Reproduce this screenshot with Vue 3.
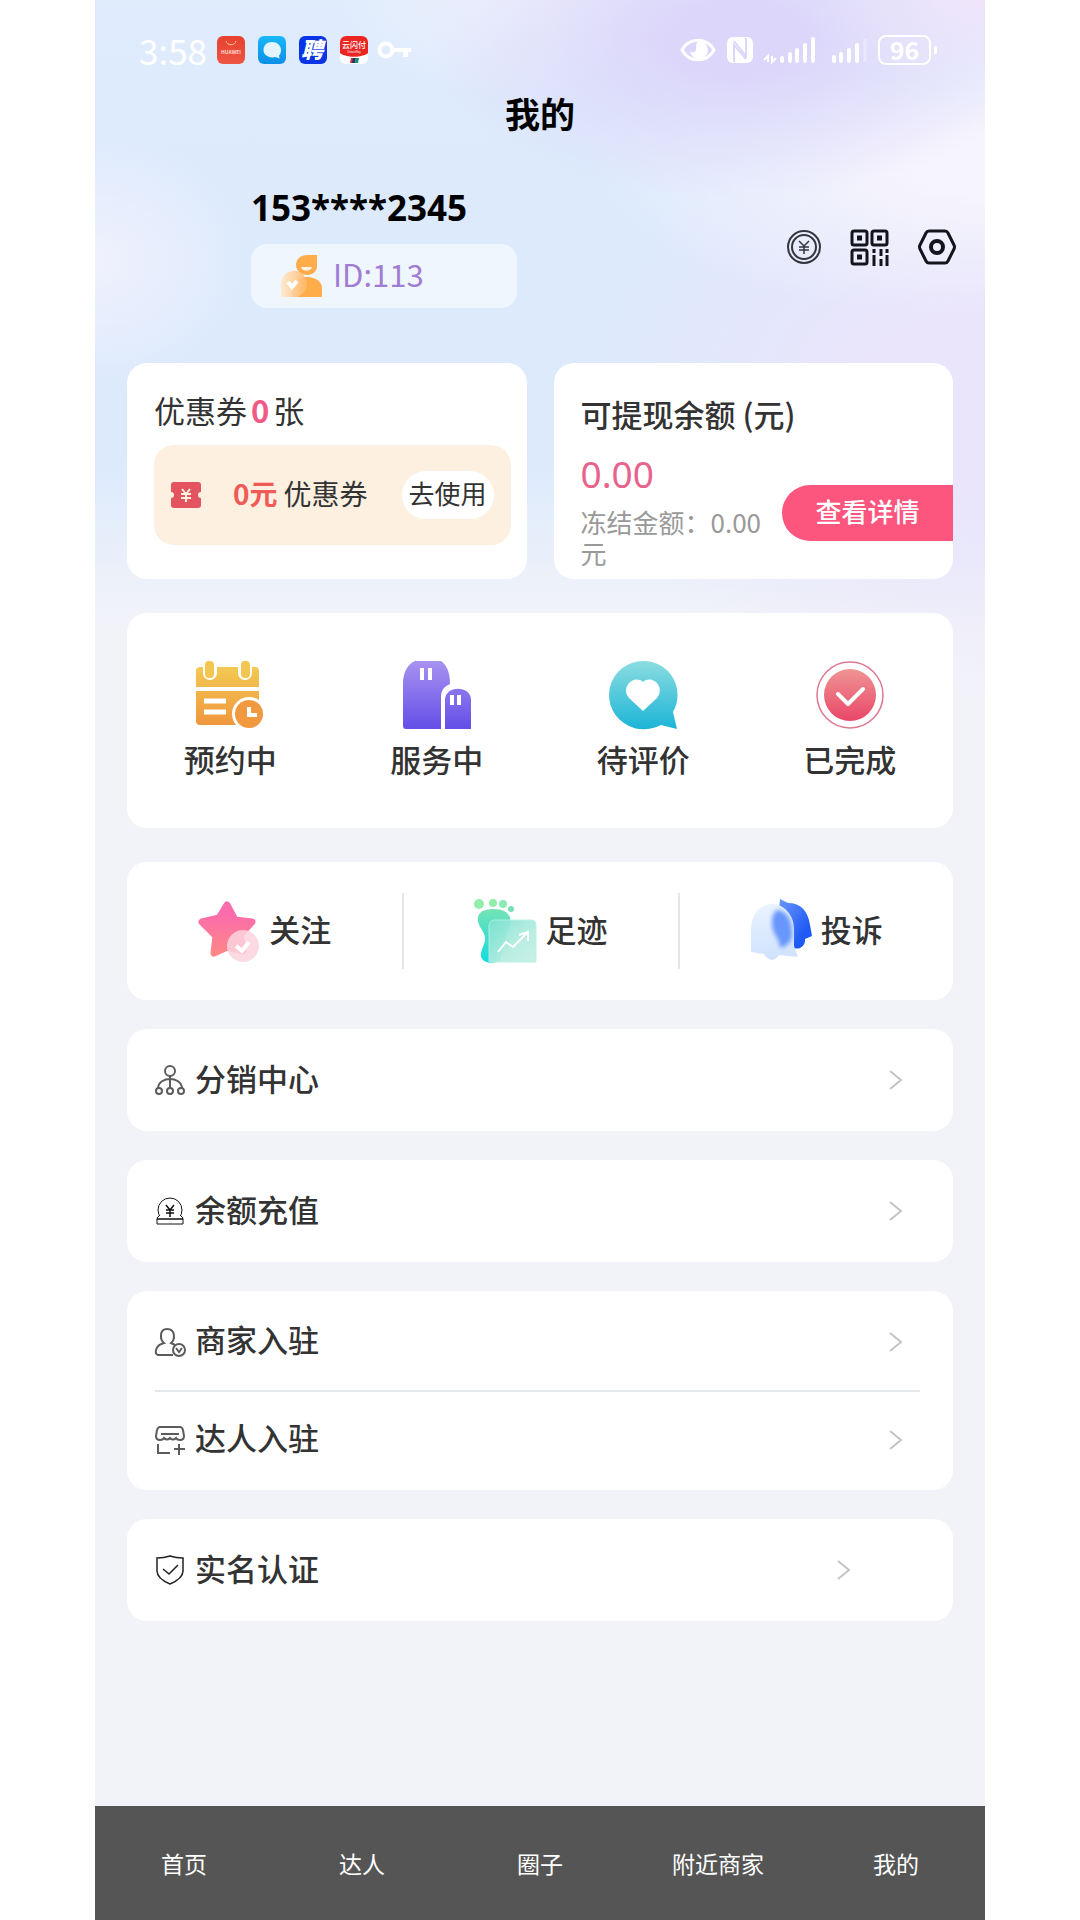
<script setup>
const orders = [
  { key: 'booked', label: '预约中' },
  { key: 'serving', label: '服务中' },
  { key: 'review', label: '待评价' },
  { key: 'done', label: '已完成' },
]
const shortcuts = [
  { key: 'follow', label: '关注' },
  { key: 'track', label: '足迹' },
  { key: 'complain', label: '投诉' },
]
const menuGroups = [
  [{ key: 'share', label: '分销中心' }],
  [{ key: 'recharge', label: '余额充值' }],
  [{ key: 'merchant', label: '商家入驻' }, { key: 'talent', label: '达人入驻' }],
  [{ key: 'verify', label: '实名认证', inset: true }],
]
const tabs = ['首页', '达人', '圈子', '附近商家', '我的']
</script>

<template>
  <div class="page">
    <div class="screen">
      <div class="status">
        <span class="time">3:58</span>
        <div class="apps">
          <svg class="app" viewBox="0 0 28 28">
            <defs><linearGradient id="mall" x1="0" y1="0" x2="0" y2="1"><stop stop-color="#e8402f" /><stop offset="1" stop-color="#ef5644" /></linearGradient></defs>
            <rect width="28" height="28" rx="6" fill="url(#mall)" />
            <path d="M9 5c1 5 9 5 10 0" fill="none" stroke="#ffc9a0" stroke-width="1" />
            <text x="14" y="18" text-anchor="middle" font-size="5" font-weight="700" fill="#ffd9cf">HUAWEI</text>
          </svg>
          <svg class="app" viewBox="0 0 28 28">
            <defs><linearGradient id="chat" x1="0" y1="0" x2="0" y2="1"><stop stop-color="#18b8f8" /><stop offset="1" stop-color="#0d8fe8" /></linearGradient></defs>
            <rect width="28" height="28" rx="6" fill="url(#chat)" />
            <path d="M14 6c5 0 9 3.500 9 8 0 3-1 4.500-2 5.500l.5 3-4-1.500c-5 1.500-12-1-12-7 0-4.500 3.500-8 8.500-8z" fill="#e2f5ff" />
          </svg>
          <svg class="app" viewBox="0 0 28 28">
            <rect width="28" height="28" rx="6" fill="#0a35e6" />
            <text x="13" y="22" text-anchor="middle" font-size="22" font-weight="900" font-style="italic" fill="#fff">聘</text>
          </svg>
          <svg class="app" viewBox="0 0 28 28">
            <rect width="28" height="28" rx="6" fill="#fff" />
            <path d="M0 17V6a6 6 0 0 1 6-6h16a6 6 0 0 1 6 6v11c-6 5-22 5-28 0z" fill="#ea2622" />
            <text x="14" y="12" text-anchor="middle" font-size="8" font-weight="500" fill="#fff">云闪付</text>
            <text x="14" y="17" text-anchor="middle" font-size="3" fill="#fff">UnionPay</text>
            <path d="M11 22h3l-1 5h-3z" fill="#d3303a" /><path d="M13 22h3l-1 5h-3z" fill="#22355f" /><path d="M16 22h3l-1 5h-3z" fill="#178a7c" />
          </svg>
        </div>
        <svg class="key" viewBox="0 0 34 20">
          <circle cx="9" cy="10" r="6.500" fill="none" stroke="#fff" stroke-width="4" />
          <path d="M16 8h18v4h-3v5h-5v-5H16z" fill="#fff" />
        </svg>
        <div class="signals">
          <svg width="36" height="26" viewBox="0 0 36 26">
            <path d="M2 13C9 0 27 0 34 13 27 26 9 26 2 13z" fill="none" stroke="#fff" stroke-width="3" />
            <path d="M19 4a9 9 0 1 1-9 10c2 3 7 1 6-3 0-3 0-5 3-7z" fill="#fff" />
          </svg>
          <svg width="26" height="28" viewBox="0 0 26 28">
            <rect y="1" width="26" height="26" rx="6" fill="#fff" />
            <path d="M7 26V9l12 14M7 5l12 15V2" fill="none" stroke="#ddd8f9" stroke-width="2" />
          </svg>
          <svg class="bars" width="51" height="28" viewBox="0 0 51 28">
            <path d="M4 26v-6l-4 4M8 20v6l4-4" fill="none" stroke="#fff" stroke-width="2" />
            <path d="M18 25v-3M26 25v-7M33 25V14M41 25V9M49 25V3" stroke="#fff" stroke-width="4" stroke-linecap="round" />
          </svg>
          <svg class="bars" width="36" height="28" viewBox="0 0 36 28">
            <path d="M3 25v-4M10 25v-7M18 25V14M26 25V9" stroke="#fff" stroke-width="4" stroke-linecap="round" />
            <path d="M34 26V3" stroke="#fff" stroke-width="3" opacity=".3" />
          </svg>
          <span class="battery">96</span>
        </div>
      </div>

      <h1 class="title">我的</h1>

      <header class="profile">
        <div class="who">
          <strong class="phone">153****2345</strong>
          <div class="badge">
            <svg class="member" viewBox="0 0 42 44">
              <defs>
                <linearGradient id="chk" x1="0" y1="0" x2="1" y2="0"><stop offset="0" stop-color="#ffe9cd" /><stop offset="1" stop-color="#ffb868" /></linearGradient>
              </defs>
              <path d="M37 1v11c0 5-4 9-10 9s-11-4-11-10S21 1 27 1z" fill="#ffad4a" />
              <path d="M21 13h11c-1 5-10 5-11 0z" fill="#fff3e2" />
              <path d="M12 43V33c0-6 6-10 15-10s15 5 15 11v9z" fill="#ffad4a" />
              <path d="M1 43V31a13 13 0 1 1 21 9l-4 3z" fill="url(#chk)" opacity=".9" />
              <path d="M8 28l4 5 5-6" fill="none" stroke="#fff" stroke-width="4" />
            </svg>
            <span class="uid">ID:113</span>
          </div>
        </div>
        <div class="tools">
          <button type="button" aria-label="钱包">
            <svg width="34" height="34" viewBox="0 0 34 34" fill="none" stroke="#35353d" stroke-width="2">
              <circle cx="17" cy="17" r="16" /><circle cx="17" cy="17" r="12" />
              <path d="M12 11l5 5 5-5M17 16v8M12 17h10M12 20h10" stroke-width="1.500" />
            </svg>
          </button>
          <button type="button" aria-label="二维码">
            <svg width="39" height="37" viewBox="0 0 39 37" fill="none" stroke="#14141c" stroke-width="3">
              <rect x="2" y="2" width="15" height="14" rx="2" /><rect x="22" y="2" width="15" height="14" rx="2" /><rect x="2" y="21" width="15" height="14" rx="2" />
              <path d="M7 9h5M27 9h5M7 28h5" stroke-width="5" />
              <path d="M24 20v4M24 26v11M31 20v7M31 30v7M37 20v4M37 26v11" />
            </svg>
          </button>
          <button type="button" aria-label="设置">
            <svg width="38" height="36" viewBox="0 0 38 36" fill="none" stroke="#14141c" stroke-width="3" stroke-linejoin="round">
              <path d="M11 2h16q2 0 3 2l6 12q1 2 0 4l-6 12q-1 2-3 2H11q-2 0-3-2L2 20q-1-2 0-4L8 4q1-2 3-2z" />
              <circle cx="19" cy="18" r="6" stroke-width="4" />
            </svg>
          </button>
        </div>
      </header>

      <main class="content">
        <div class="wallet">
          <section class="card coupons">
            <h2 class="coupon-title">优惠券<b>0</b>张</h2>
            <div class="coupon">
              <svg class="ticket" viewBox="0 0 30 26">
                <path d="M3 0h24q3 0 3 3v7a3 3 0 0 0 0 6v7q0 3-3 3H3q-3 0-3-3v-7a3 3 0 0 0 0-6V3q0-3 3-3z" fill="#e35460" />
                <path d="M11 7l4 5 4-5M15 12v8M10 12h10M10 16h10" fill="none" stroke="#fff0e0" stroke-width="2" />
              </svg>
              <span class="coupon-name"><b>0元</b>优惠券</span>
              <button type="button" class="use">去使用</button>
            </div>
          </section>
          <section class="card balance">
            <h2 class="balance-title">可提现余额 (元)</h2>
            <p class="amount">0.00</p>
            <p class="frozen">冻结金额：0.00元</p>
            <button type="button" class="detail">查看详情</button>
          </section>
        </div>

        <section class="card orders">
          <a v-for="o in orders" :key="o.key" href="#" class="order">
            <svg v-if="o.key === 'booked'" viewBox="0 0 68 68">
              <defs><linearGradient id="gold" x1="0" y1="0" x2="0" y2="68" gradientUnits="userSpaceOnUse"><stop stop-color="#f3cf55" /><stop offset="1" stop-color="#f0923c" /></linearGradient></defs>
              <path d="M5 6h54q4 0 4 4v16H0V10q0-4 5-4zM0 30h63v32q0 2-3 2H4q-4 0-4-4z" fill="url(#gold)" />
              <rect x="7" y="-3" width="14" height="22" rx="7" fill="#fff" /><rect x="42" y="-3" width="14" height="22" rx="7" fill="#fff" />
              <rect x="9" y="0" width="9" height="17" rx="4" fill="#f2c650" /><rect x="45" y="0" width="9" height="17" rx="4" fill="#f2c650" />
              <path d="M8 40h22M8 51h22" stroke="#fff" stroke-width="5" />
              <circle cx="53" cy="53" r="17" fill="#fff" /><circle cx="53" cy="53" r="14" fill="#f0993f" />
              <path d="M53 46v8h8" fill="none" stroke="#fff" stroke-width="4" />
            </svg>
            <svg v-else-if="o.key === 'serving'" viewBox="0 0 68 68">
              <defs><linearGradient id="violet" x1="0" y1="0" x2="0" y2="68" gradientUnits="userSpaceOnUse"><stop stop-color="#a892f0" /><stop offset="1" stop-color="#634ee8" /></linearGradient></defs>
              <path d="M12 0h26c6 4 9 12 9 23-7 3-9 7-9 14v31H3q-3 0-3-3V20C1 10 5 3 12 0z" fill="url(#violet)" />
              <path d="M42 68V39c0-15 26-15 26 0v29z" fill="url(#violet)" />
              <path d="M19 7v12M27 7v12M49 34v10M56 34v10" stroke="#fff" stroke-width="4" />
            </svg>
            <svg v-else-if="o.key === 'review'" viewBox="0 0 68 68">
              <defs><linearGradient id="cyan" x1="0" y1="0" x2="0" y2="1"><stop stop-color="#8bdde0" /><stop offset="1" stop-color="#1cb4d8" /></linearGradient></defs>
              <path d="M34 0a34 34 0 0 1 30 51l4 17-16-4c-12 6-24 5-32 1A34 34 0 0 1 34 0z" fill="url(#cyan)" />
              <path d="M34 50L20 37c-9-11 5-24 14-16 9-8 23 5 14 16z" fill="#fff" />
            </svg>
            <svg v-else viewBox="0 0 68 68">
              <defs><linearGradient id="rose" x1="0" y1="0" x2="0" y2="1"><stop stop-color="#ef9494" /><stop offset="1" stop-color="#e94768" /></linearGradient></defs>
              <circle cx="34" cy="34" r="33" fill="none" stroke="#dc7890" stroke-width="1.500" />
              <circle cx="34" cy="34" r="26" fill="url(#rose)" />
              <path d="M22 33l10 10 15-15" fill="none" stroke="#fff" stroke-width="4" stroke-linecap="round" stroke-linejoin="round" />
            </svg>
            <span>{{ o.label }}</span>
          </a>
        </section>

        <section class="card shortcuts">
          <a v-for="s in shortcuts" :key="s.key" href="#" class="shortcut">
            <svg v-if="s.key === 'follow'" viewBox="0 0 62 66">
              <defs><linearGradient id="star" x1="0" y1="5" x2="0" y2="56" gradientUnits="userSpaceOnUse"><stop offset=".2" stop-color="#fb6cac" /><stop offset="1" stop-color="#fd8687" /></linearGradient></defs>
              <path d="M29 7l8 15 17 2-12 13 3 16-16-4-13 6 2-17L4 24l17-4z" fill="url(#star)" stroke="url(#star)" stroke-width="7" stroke-linejoin="round" />
              <circle cx="45" cy="48" r="16" fill="#fcd3de" opacity=".85" />
              <path d="M38 48l6 5 7-9" fill="none" stroke="#fff" stroke-width="4" />
            </svg>
            <svg v-else-if="s.key === 'track'" viewBox="0 0 62 66">
              <defs>
                <linearGradient id="foot" x1="0" y1="0" x2="0" y2="1"><stop stop-color="#74e3b4" /><stop offset="1" stop-color="#12dcdf" /></linearGradient>
                <linearGradient id="glass" x1="0" y1="0" x2="1" y2="1"><stop stop-color="#7ee3d1" /><stop offset=".6" stop-color="#b5ece0" /><stop offset="1" stop-color="#c5f0e5" /></linearGradient>
              </defs>
              <circle cx="5" cy="6" r="5" fill="#94edaa" /><circle cx="19" cy="5" r="4" fill="#94edaa" /><circle cx="29" cy="6" r="4" fill="#8ceab5" /><circle cx="37" cy="11" r="3" fill="#74e2b6" />
              <path d="M19 11c13 0 19 6 17 15-3 12-7 18-10 36-8 6-21 2-19-7 3-11 7-13 1-23C-1 19 5 11 19 11z" fill="url(#foot)" />
              <path d="M15 64V28q0-6 6-6h36q5 0 5 5v37z" fill="url(#glass)" opacity=".93" stroke="#b5efe3" />
              <path d="M24 54l8-10 7 5 14-14M45 37l9-3v9" fill="none" stroke="#fff" stroke-width="2" />
            </svg>
            <svg v-else viewBox="0 0 62 66">
              <defs>
                <linearGradient id="head" x1="0" y1="0" x2="1" y2="1"><stop stop-color="#719cfa" /><stop offset=".75" stop-color="#1d59f4" /></linearGradient>
                <linearGradient id="shell" x1="0" y1="0" x2="0" y2="1"><stop stop-color="#eaf3ff" /><stop offset="1" stop-color="#cfe2fd" /></linearGradient>
                <filter id="soft" x="-20%" y="-20%" width="140%" height="140%"><feGaussianBlur stdDeviation="2" /></filter>
              </defs>
              <path d="M30 1l8 4c13 0 20 8 22 22l2 11-7 3c1 8-8 12-12 8L26 40z" fill="url(#head)" />
              <path d="M1 54V31C2 14 11 7 22 6c11 0 22 10 22 25v17l4 11-19-2c-4 7-11 6-15-1z" fill="url(#shell)" />
              <path d="M28 12c11 2 14 12 14 24 0 7-4 12-12 14 0-11-9-14-8-26 0-6 2-11 6-12z" fill="#6796fb" filter="url(#soft)" />
            </svg>
            <span>{{ s.label }}</span>
          </a>
        </section>

        <nav v-for="(group, i) in menuGroups" :key="i" class="card menu" :class="{ double: group.length > 1 }">
          <a v-for="m in group" :key="m.key" href="#" class="item" :class="{ inset: m.inset }">
            <svg class="item-icon" viewBox="0 0 30 30" fill="none" stroke="#5c5c5c" stroke-width="2">
              <template v-if="m.key === 'share'">
                <circle cx="15" cy="6" r="5" /><path d="M15 11v12M3 23c1-12 23-12 24 0" />
                <circle cx="4" cy="26" r="3" /><circle cx="15" cy="26" r="3" /><circle cx="26" cy="26" r="3" />
              </template>
              <g v-else-if="m.key === 'recharge'" stroke="#111" stroke-width="1">
                <circle cx="15" cy="14" r="12" fill="#fff" /><path d="M4 20q-2 1-2 3h26q0-2-2-3M2 23v5h26v-5z" fill="#fff" />
                <path d="M11 9l4 5 4-5M15 14v7M11 14h8M11 17h8" stroke-width="1.500" />
              </g>
              <template v-else-if="m.key === 'merchant'">
                <path d="M18 28H3q-3-1-2-5c1-4 4-6 8-7-4-3-5-14 3-14 9 0 8 11 4 14l4 2" />
                <circle cx="24" cy="23" r="6" /><path d="M21 21l3 4 3-4" />
              </template>
              <template v-else-if="m.key === 'talent'">
                <path d="M5 2h20q2 0 3 3l1 6q0 4-4 4-3 0-4-2-3 3-6 0-3 3-6 0-1 2-4 2-4 0-4-4l1-6q1-3 3-3zM6 9h18M3 19v9h12M24 19v11M19 24h11" />
              </template>
              <g v-else stroke="#222">
                <path d="M15 1c3 1 8 2 13 2v13c0 6-6 10-13 13C8 26 2 22 2 16V3c5 0 10-1 13-2z" stroke-width="1.500" /><path d="M8 14l6 5 9-9" stroke-width="1.500" />
              </g>
            </svg>
            <span class="item-label">{{ m.label }}</span>
            <svg class="chevron" viewBox="0 0 13 20" fill="none" stroke="#c4c4c4" stroke-width="2"><path d="M1 1l11 9-11 9" /></svg>
          </a>
        </nav>
      </main>

      <nav class="tabbar">
        <a v-for="t in tabs" :key="t" href="#">{{ t }}</a>
      </nav>
    </div>
  </div>
</template>

<style>
body {
  margin: 0;
  background: #fff;
}
</style>

<style scoped>
* {
  box-sizing: border-box;
}
.page {
  padding: 0 95px;
  font-family: "Noto Sans CJK SC", "Noto Sans", sans-serif;
  color: #333;
}
.screen {
  display: flex;
  flex-direction: column;
  min-height: 100vh;
  background:
    radial-gradient(ellipse 180px 90px at 100% 0, #f0e5fb, rgba(240, 229, 251, 0) 100%),
    radial-gradient(ellipse 310px 160px at 72% 40px, #dcd6fa 20%, rgba(220, 214, 250, 0) 100%),
    radial-gradient(ellipse 400px 150px at 100% 165px, #f6f4fd 20%, rgba(246, 244, 253, 0) 100%),
    radial-gradient(ellipse 420px 300px at 100% 400px, #eae5fb 30%, rgba(234, 229, 251, 0) 100%),
    radial-gradient(ellipse 160px 130px at 0 260px, #f0f1fd, rgba(240, 241, 253, 0) 100%),
    radial-gradient(ellipse 200px 100px at 50% 0, #eff2fc, rgba(239, 242, 252, 0) 100%),
    linear-gradient(#e0ecfc, #dceafc 200px, #dceafc 460px, #f2f3f9 620px);
}
a {
  color: inherit;
  text-decoration: none;
}
button {
  border: 0;
  padding: 0;
  background: none;
  font-family: inherit;
  color: inherit;
}
h1, h2, p {
  margin: 0;
}
svg {
  display: block;
  flex: none;
  overflow: visible;
}
.status {
  display: flex;
  align-items: center;
  height: 36px;
  margin-top: 32px;
  padding: 0 54px 0 44px;
  color: #fff;
}
.time {
  width: 78px;
  font-size: 35px;
  line-height: 36px;
}
.apps {
  display: flex;
  gap: 13px;
}
.app {
  width: 28px;
  height: 28px;
}
.key {
  width: 34px;
  height: 20px;
  margin-left: 9px;
}
.signals {
  display: flex;
  align-items: center;
  gap: 11px;
  margin-left: auto;
}
.bars + .bars {
  margin-left: 5px;
}
.battery {
  position: relative;
  width: 53px;
  height: 30px;
  border: 2px solid #fff;
  border-radius: 8px;
  font-size: 25px;
  font-weight: 700;
  line-height: 25px;
  text-align: center;
}
.battery::after {
  content: "";
  position: absolute;
  right: -8px;
  top: 9px;
  width: 3px;
  height: 8px;
  border-radius: 2px;
  background: #fff;
}
.title {
  margin-top: 18px;
  font-size: 35px;
  line-height: 54px;
  font-weight: 700;
  text-align: center;
  color: #000;
}
.profile {
  display: flex;
  align-items: center;
  justify-content: space-between;
  margin-top: 44px;
  padding: 0 29px 0 156px;
}
.who {
  display: flex;
  flex-direction: column;
  gap: 12px;
}
.phone {
  font-family: "Noto Sans", sans-serif;
  font-size: 35px;
  line-height: 48px;
  color: #000;
}
.badge {
  display: flex;
  align-items: center;
  gap: 11px;
  width: 266px;
  height: 64px;
  padding-left: 29px;
  border-radius: 16px;
  background: rgba(248, 251, 255, .7);
  font-size: 31px;
  color: #a07dd2;
}
.uid {
  padding-bottom: 6px;
}
.member {
  width: 42px;
  height: 44px;
}
.tools {
  display: flex;
  align-items: center;
  gap: 29px;
  padding-top: 2px;
}
.content {
  display: flex;
  flex-direction: column;
  gap: 29px;
  padding: 55px 32px 32px;
  font-size: 31px;
}
.card {
  border-radius: 20px;
  background: #fff;
}
.wallet {
  display: grid;
  grid-template-columns: 1fr 1fr;
  gap: 27px;
  height: 216px;
  margin-bottom: 5px;
}
.coupons {
  padding: 25px 16px 0 27px;
}
.coupon-title {
  font-size: 31px;
  font-weight: 400;
  line-height: 44px;
}
.coupon-title b {
  margin: 0 4px;
  color: #ef5a87;
}
.coupon {
  display: flex;
  align-items: center;
  height: 100px;
  margin-top: 13px;
  padding: 0 17px;
  border-radius: 20px;
  background: #fdf0e1;
}
.ticket {
  width: 30px;
  height: 26px;
}
.coupon-name {
  margin-left: 32px;
  padding-bottom: 4px;
  font-size: 28px;
  white-space: nowrap;
}
.coupon-name b {
  margin-right: 6px;
  color: #ef5b57;
}
.use {
  width: 92px;
  height: 48px;
  margin-left: auto;
  padding-bottom: 4px;
  border-radius: 24px;
  background: #fff;
  font-size: 26px;
  line-height: 44px;
  white-space: nowrap;
}
.balance {
  position: relative;
  padding: 29px 27px 0;
}
.balance-title {
  font-size: 31px;
  font-weight: 500;
  line-height: 44px;
}
.amount {
  margin-top: 14px;
  font-family: "Noto Sans", sans-serif;
  font-size: 37px;
  line-height: 48px;
  color: #e8638b;
}
.frozen {
  width: 190px;
  margin-top: 8px;
  font-size: 26px;
  line-height: 31px;
  color: #999;
}
.detail {
  position: absolute;
  right: 0;
  top: 122px;
  width: 171px;
  height: 56px;
  padding-bottom: 4px;
  border-radius: 28px 0 0 28px;
  background: #fc567f;
  font-size: 26px;
  font-weight: 500;
  line-height: 52px;
  color: #fff;
}
.orders {
  display: grid;
  grid-template-columns: repeat(4, 1fr);
  height: 215px;
  margin-bottom: 5px;
  padding-top: 48px;
  font-weight: 500;
}
.order {
  display: flex;
  flex-direction: column;
  align-items: center;
  gap: 8px;
  line-height: 44px;
}
.order svg {
  width: 68px;
  height: 68px;
}
.shortcuts {
  display: grid;
  grid-template-columns: repeat(3, 1fr);
  align-items: center;
  height: 138px;
  font-weight: 500;
}
.shortcut {
  display: flex;
  align-items: center;
  justify-content: center;
  gap: 9px;
  height: 76px;
}
.shortcut + .shortcut {
  border-left: 2px solid #e6e6e8;
}
.shortcut svg {
  width: 62px;
  height: 66px;
}
.shortcut span,
.item-label {
  padding-bottom: 6px;
}
.menu {
  padding: 0 33px 0 28px;
  font-weight: 500;
}
.double {
  padding-top: 2px;
  padding-bottom: 3px;
}
.item {
  display: flex;
  align-items: center;
  gap: 10px;
  height: 102px;
  padding-right: 18px;
}
.double .item {
  height: 97px;
}
.item + .item {
  border-top: 2px solid #e4e8ea;
}
.inset {
  padding-right: 70px;
}
.item-icon {
  width: 30px;
  height: 30px;
}
.chevron {
  width: 13px;
  height: 20px;
  margin-left: auto;
}
.tabbar {
  display: grid;
  grid-template-columns: repeat(5, 1fr);
  align-items: center;
  height: 114px;
  margin-top: auto;
  background: #555;
  font-size: 23px;
  text-align: center;
  color: #fff;
}
</style>
